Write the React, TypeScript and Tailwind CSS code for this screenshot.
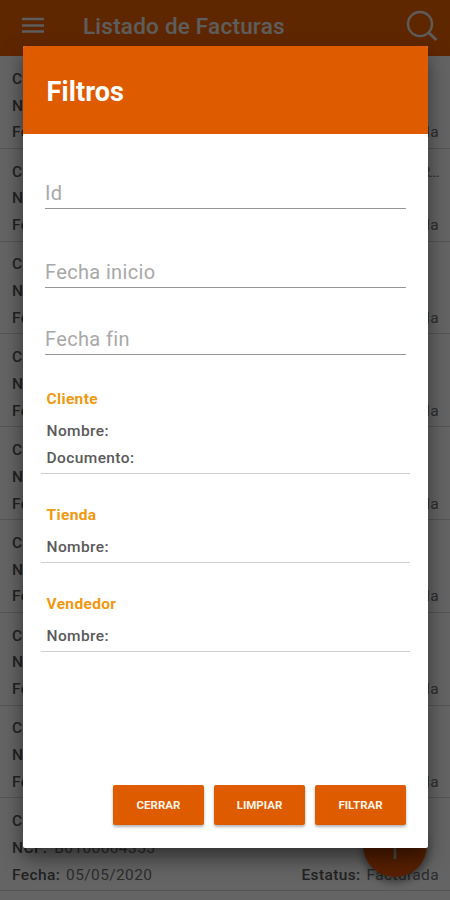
import React from "react";

interface Invoice {
  client: string;
  ncf: string;
  date: string;
}

const invoices: Invoice[] = [
  { client: "", ncf: "B0100004363", date: "05/05/2020" },
  { client: "MARTINEZ R...", ncf: "B0100004362", date: "05/05/2020" },
  { client: "", ncf: "B0100004361", date: "05/05/2020" },
  { client: "", ncf: "B0100004360", date: "05/05/2020" },
  { client: "", ncf: "B0100004359", date: "05/05/2020" },
  { client: "", ncf: "B0100004358", date: "05/05/2020" },
  { client: "", ncf: "B0100004357", date: "05/05/2020" },
  { client: "", ncf: "B0100004356", date: "05/05/2020" },
  { client: "", ncf: "B0100004355", date: "05/05/2020" },
];

function InvoiceRow({ invoice }: { invoice: Invoice }) {
  return (
    <li className="h-[92.8px] border-b border-[#d2d2d2] pt-[9.8px] pr-[11px] pl-3 text-[15.5px] leading-[26.8px] tracking-[0.38px] text-[#707070]">
      <div className="flex justify-between">
        <b className="font-medium text-[#555]">Cliente:</b>
        <span className="tracking-[-0.9px]">{invoice.client}</span>
      </div>
      <div>
        <b className="font-medium text-[#555]">NCF:</b>
        <span className="ml-[7px]">{invoice.ncf}</span>
      </div>
      <div className="flex justify-between">
        <span>
          <b className="font-medium text-[#555]">Fecha:</b>
          <span className="ml-[6px]">{invoice.date}</span>
        </span>
        <span>
          <b className="font-medium text-[#555]">Estatus:</b>
          <span className="ml-[6px]">Facturada</span>
        </span>
      </div>
    </li>
  );
}

function Field({ label, className }: { label: string; className: string }) {
  return (
    <div className={`mr-[21.5px] ml-[22px] flex items-end border-b border-[#969696] pb-[2px] text-[20px] leading-[26px] tracking-[0.35px] text-[#a8a8a8] ${className}`}>
      {label}
    </div>
  );
}

function Section({ title, rows, className }: { title: string; rows: string[]; className: string }) {
  return (
    <section className={`mr-[17.5px] ml-[18px] border-b border-[#cfcfcf] pt-px pl-[5.5px] text-[15.5px] font-medium tracking-[0.4px] text-[#5a5a5a] ${className}`}>
      <h2 className="mb-[6px] leading-[26px] font-bold tracking-[0.35px] text-[#f0980f]">{title}</h2>
      {rows.map((row) => (
        <p key={row} className="leading-[27px]">
          {row}
        </p>
      ))}
    </section>
  );
}

export default function App() {
  return (
    <div className="relative h-[900px] w-[450px] overflow-hidden bg-[#fafafa] font-[Roboto,sans-serif]">
      <header className="flex h-14 items-center bg-[#ee6200] pr-[12px] pl-[21px] text-[#e8e8e8]">
        <svg width="23" height="17" viewBox="0 0 23 17" className="-mt-[6px]" fill="none" stroke="currentColor" strokeWidth="2.4">
          <path d="M1 2h22M1 8.5h22M1 14.5h22" />
        </svg>
        <h1 className="-mt-[2px] ml-[39px] grow text-[22.5px] font-medium tracking-[0.22px]">Listado de Facturas</h1>
        <svg width="32" height="32" viewBox="0 0 32 32" className="-mt-[5px]" fill="none" stroke="currentColor" strokeWidth="2.4">
          <circle cx="14" cy="14" r="12" />
          <path d="m22.5 22.5 8 7.5" strokeWidth="3" />
        </svg>
      </header>
      <ul>
        {invoices.map((invoice) => (
          <InvoiceRow key={invoice.ncf} invoice={invoice} />
        ))}
      </ul>
      <button className="absolute top-[813px] left-[363px] flex size-16 items-center justify-center rounded-full bg-[#df5200] shadow-[0_5px_9px_rgba(0,0,0,0.45)]">
        <svg width="28" height="28" viewBox="0 0 28 28" stroke="#ccc" strokeWidth="2.5">
          <path d="M14 0v28M0 14h28" />
        </svg>
      </button>

      <div className="absolute inset-0 bg-black/60" />

      <div role="dialog" className="absolute top-[46px] left-[23px] flex h-[802px] w-[404.5px] flex-col overflow-hidden rounded-[2px] bg-white shadow-[0_10px_20px_rgba(0,0,0,0.5)]">
        <div className="flex h-[88px] shrink-0 items-center bg-[#df5b00] pt-[4px] pl-[23.5px] text-[27px] font-bold tracking-[0.1px] text-white">
          Filtros
        </div>
        <Field label="Id" className="mt-[43px] h-[32px]" />
        <Field label="Fecha inicio" className="mt-[47px] h-[32px]" />
        <Field label="Fecha fin" className="mt-[35px] h-[32px]" />
        <Section title="Cliente" rows={["Nombre:", "Documento:"]} className="mt-[30px] h-[89px]" />
        <Section title="Tienda" rows={["Nombre:"]} className="mt-[27px] h-[62px]" />
        <Section title="Vendedor" rows={["Nombre:"]} className="mt-[27px] h-[62px]" />
        <div className="mt-auto mr-[21.5px] mb-[23px] flex justify-end gap-[10px]">
          {["CERRAR", "LIMPIAR", "FILTRAR"].map((action) => (
            <button key={action} className="h-10 w-[91px] rounded-[2px] bg-[#df5b00] pt-[2px] text-[11.5px] font-bold text-[#fff4e8] shadow-[0_2px_3px_rgba(0,0,0,0.3)]">
              {action}
            </button>
          ))}
        </div>
      </div>
    </div>
  );
}
